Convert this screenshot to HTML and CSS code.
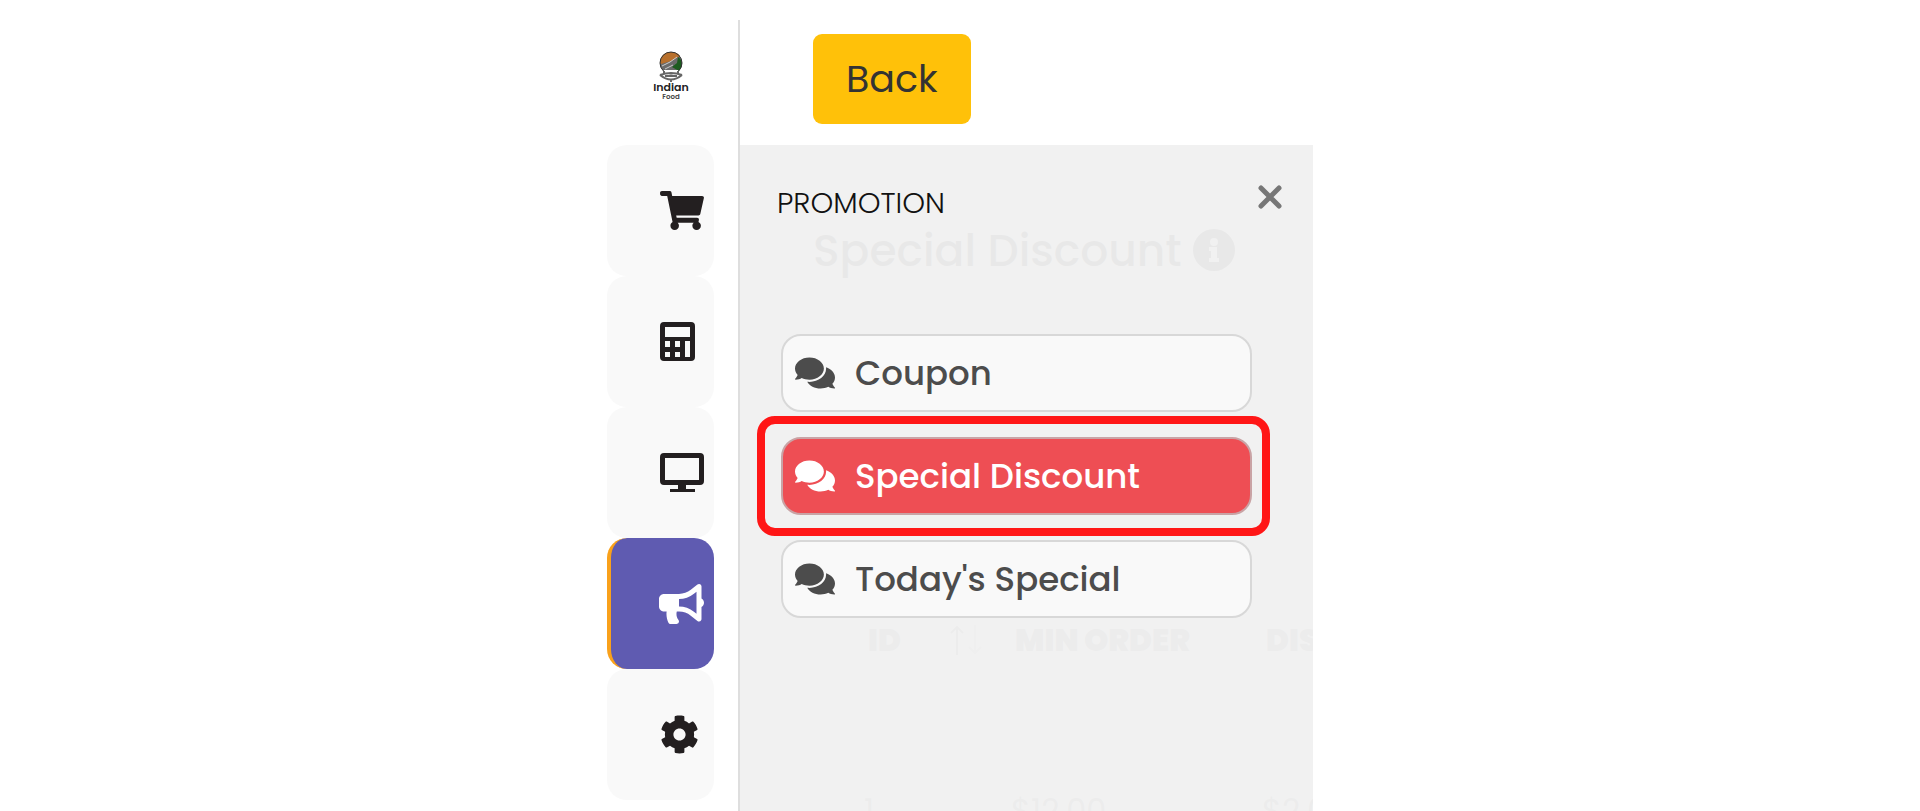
FILE: index.html
```html
<!DOCTYPE html>
<html lang="en">
<head>
<meta charset="utf-8">
<meta name="viewport" content="width=device-width, initial-scale=1">
<title>Special Discount</title>
<link rel="stylesheet" href="styles.css">
</head>
<body>
<svg width="0" height="0" class="sprite" aria-hidden="true">
  <symbol id="comments" viewBox="0 0 576 512"><path d="M416 192c0-88.4-93.1-160-208-160S0 103.6 0 192c0 34.3 14.1 65.9 38 92-13.4 30.2-35.5 54.2-35.8 54.5-2.2 2.3-2.8 5.7-1.5 8.7S4.8 352 8 352c36.6 0 66.9-12.3 88.7-25 32.2 15.7 70.3 25 111.3 25 114.9 0 208-71.6 208-160zm122 220c23.9-26 38-57.7 38-92 0-66.9-53.5-124.2-129.3-148.1.9 6.6 1.3 13.3 1.3 20.1 0 105.9-107.7 192-240 192-10.8 0-21.3-.8-31.7-1.9C207.8 439.6 281.8 480 368 480c41 0 79.1-9.2 111.3-25 21.8 12.7 52.1 25 88.7 25 3.2 0 6.1-1.9 7.3-4.8 1.3-2.9.7-6.3-1.5-8.7-.3-.2-22.4-24.2-35.8-54.5z"/></symbol>
</svg>
<div class="shell">
  <aside class="rail">
    <a class="logo" href="#" aria-label="Indian Food">
      <svg width="40" height="56" viewBox="0 0 40 56">
        <circle cx="20" cy="15" r="11" fill="#6b6b6b"/>
        <path d="M9 15C9 7 15 4 20 4c4 0 7 1 9 4l-9 5-10 3z" fill="#b8702c"/>
        <path d="M27 9c5 3 5 10 1 14l-7-4 5-4z" fill="#1d5c20"/>
        <path d="M11 18l8-4 7-5M14 21l8-4" stroke="#ccc" stroke-width="1" fill="none"/>
        <circle cx="20" cy="15" r="11" fill="none" stroke="#333" stroke-width="1"/>
        <path d="M13 22h14l1 4H12z" fill="#fff"/>
        <path d="M13 23v3M27 23v3M9 27q11-4 22 0M9 27q11 9 22 0M14 28h12M20 31v3" stroke="#666" stroke-width="2" fill="none"/>
        <text x="20" y="43" text-anchor="middle" class="logo-name">Indian</text>
        <text x="20" y="51" text-anchor="middle" class="logo-sub">Food</text>
      </svg>
    </a>
    <nav class="rail-nav" aria-label="Main">
      <a class="tile" href="#" aria-label="Orders"><svg width="44" height="39" viewBox="0 0 576 512"><path d="M528.12 301.319l47.273-208C578.806 78.301 567.391 64 551.99 64H159.208l-9.166-44.81C147.758 8.021 137.93 0 126.529 0H24C10.745 0 0 10.745 0 24v16c0 13.255 10.745 24 24 24h69.883l70.248 343.435C147.325 417.1 136 435.222 136 456c0 30.928 25.072 56 56 56s56-25.072 56-56c0-15.674-6.447-29.835-16.824-40h209.647C430.447 426.165 424 440.326 424 456c0 30.928 25.072 56 56 56s56-25.072 56-56c0-22.172-12.888-41.332-31.579-50.405l5.517-24.276c3.413-15.018-8.002-29.319-23.403-29.319H218.117l-6.545-32h293.145c11.206 0 20.92-7.754 23.403-18.681z"/></svg></a>
      <a class="tile" href="#" aria-label="Accounts"><svg width="35" height="39" viewBox="0 0 35 39"><path fill-rule="evenodd" d="M4 0h27q4 0 4 4v31q0 4-4 4H4q-4 0-4-4V4q0-4 4-4zM5 5v10h25V5zM5 19v6h5v-6zM15 19v6h5v-6zM5 30v5h5v-5zM15 30v5h5v-5zM25 19v16h5V19z"/></svg></a>
      <a class="tile" href="#" aria-label="Display"><svg width="44" height="39" viewBox="0 0 44 39"><path fill-rule="evenodd" d="M4 0h36q4 0 4 4v24q0 4-4 4H26v4h9v3H10v-3h8v-4H4q-4 0-4-4V4q0-4 4-4zM5 5v22h34V5z"/></svg></a>
      <a class="tile tile-active" href="#" aria-label="Promotion" aria-current="page"><svg width="45" height="40" viewBox="0 0 576 512"><path d="M576 240c0-23.63-12.95-44.04-32-55.12V32.01C544 23.26 537.02 0 512 0c-7.12 0-14.19 2.38-19.98 7.02l-85.03 68.03C364.28 109.19 310.66 128 256 128H64c-35.35 0-64 28.65-64 64v96c0 35.35 28.65 64 64 64h33.7c-1.39 10.48-2.18 21.14-2.18 32 0 39.77 9.26 77.35 25.56 110.94 5.19 10.69 16.52 17.06 28.4 17.06h74.28c26.05 0 41.69-29.84 25.9-50.56-16.4-21.52-26.15-48.36-26.15-77.44 0-11.11 1.62-21.79 4.41-32H256c54.66 0 108.28 18.81 150.98 52.95l85.03 68.03a32.023 32.023 0 0 0 19.98 7.02c24.92 0 32-22.78 32-32V295.13C563.05 284.04 576 263.63 576 240zm-96 141.42l-33.05-26.44C392.95 311.78 325.12 288 256 288v-96c69.12 0 136.95-23.78 190.95-66.98L480 98.58v282.84z"/></svg></a>
      <a class="tile" href="#" aria-label="Settings"><svg width="39" height="39" viewBox="0 0 512 512"><path d="M487.4 315.7l-42.6-24.6c4.3-23.2 4.3-47 0-70.2l42.6-24.6c4.9-2.8 7.1-8.6 5.5-14-11.1-35.6-30-67.8-54.7-94.6-3.8-4.1-10-5.1-14.8-2.3L380.8 110c-17.9-15.4-38.5-27.3-60.8-35.1V25.8c0-5.6-3.9-10.5-9.4-11.7-36.7-8.2-74.3-7.8-109.2 0-5.5 1.2-9.4 6.1-9.4 11.7V75c-22.2 7.9-42.8 19.8-60.8 35.1L88.7 85.5c-4.9-2.8-11-1.9-14.8 2.3-24.7 26.7-43.6 58.9-54.7 94.6-1.7 5.4.6 11.2 5.5 14L67.3 221c-4.3 23.2-4.3 47 0 70.2l-42.6 24.6c-4.9 2.8-7.1 8.6-5.5 14 11.1 35.6 30 67.8 54.7 94.6 3.8 4.1 10 5.1 14.8 2.3l42.6-24.6c17.9 15.4 38.5 27.3 60.8 35.1v49.2c0 5.6 3.9 10.5 9.4 11.7 36.7 8.2 74.3 7.8 109.2 0 5.5-1.2 9.4-6.1 9.4-11.7v-49.2c22.2-7.9 42.8-19.8 60.8-35.1l42.6 24.6c4.9 2.8 11 1.9 14.8-2.3 24.7-26.7 43.6-58.9 54.7-94.6 1.5-5.5-.7-11.3-5.6-14.1zM256 336c-44.1 0-80-35.9-80-80s35.9-80 80-80 80 35.9 80 80-35.9 80-80 80z"/></svg></a>
    </nav>
  </aside>
  <main class="main">
    <header class="topbar"><button class="back" type="button">Back</button></header>
    <div class="content">
      <section class="page">
        <h1 class="title">Special Discount
          <svg width="42" height="42" viewBox="0 0 42 42" aria-hidden="true"><path fill-rule="evenodd" d="M21 0a21 21 0 1 1 0 42a21 21 0 1 1 0-42zM21 9a4 4 0 1 0 0 8a4 4 0 1 0 0-8zM16 18v4h2v7h-2v4h10v-4h-2V18z"/></svg>
        </h1>
        <div class="card">
          <table class="orders">
            <thead><tr><th class="col-id"><span class="sort">ID <svg width="36" height="30" viewBox="0 0 36 30" fill="none" aria-hidden="true"><path d="M8 30V2M2 8l6-6 6 6" stroke="#999" stroke-width="2"/><path d="M26 0v28M20 22l6 6 6-6" stroke="#ccc" stroke-width="2"/></svg></span></th><th class="col-min">MIN ORDER</th><th>DISCOUNT</th></tr></thead>
            <tbody><tr><td>1</td><td>$12.00</td><td>$2.00</td></tr></tbody>
          </table>
        </div>
      </section>
      <section class="drawer" aria-labelledby="drawer-title">
        <div class="drawer-head">
          <h2 class="drawer-title" id="drawer-title">PROMOTION</h2>
          <button class="close" type="button" aria-label="Close"><svg width="24" height="24" viewBox="0 0 24 24"><path d="M3 3l18 18M21 3L3 21" stroke="#777" stroke-width="5" stroke-linecap="round"/></svg></button>
        </div>
        <nav class="menu" aria-label="Promotion">
          <a class="item" href="#"><svg width="40" height="36"><use href="#comments"/></svg>Coupon</a>
          <a class="item item-active" href="#" aria-current="page"><svg width="40" height="36"><use href="#comments"/></svg>Special Discount</a>
          <a class="item" href="#"><svg width="40" height="36"><use href="#comments"/></svg>Today's Special</a>
        </nav>
      </section>
    </div>
  </main>
</div>
</body>
</html>
```
FILE: styles.css
```css
* { box-sizing: border-box; }
body {
  margin: 0;
  height: 100vh;
  overflow: hidden;
  background: #fff;
  color: #212529;
  font-family: Poppins, Inter, "Open Sans", sans-serif;
}
svg { display: block; flex: none; }
a { color: inherit; text-decoration: none; }
button { font: inherit; color: inherit; border: 0; padding: 0; cursor: pointer; }
.sprite { position: absolute; }
.shell {
  display: flex;
  width: 100%;
  max-width: 706px;
  height: 100%;
  margin: 0 auto;
  padding-top: 20px;
}
.rail { flex: none; width: 131px; }
.logo {
  display: flex;
  height: 125px;
  padding: 28px 0 0 44px;
}
.logo-name { font-size: 11px; font-weight: 600; fill: #222; }
.logo-sub { font-size: 7px; font-weight: 600; fill: #444; }
.tile {
  display: flex;
  align-items: center;
  width: 107px;
  height: 131px;
  padding-left: 53px;
  border-radius: 20px;
  background: #f9f9f9;
  fill: #231f20;
}
.tile-active {
  padding-left: 48px;
  border-left: 4px solid #f9a11b;
  background: #5f5bb1;
  fill: #fff;
}
.main {
  flex: 1;
  min-width: 0;
  display: flex;
  flex-direction: column;
  border-left: 2px solid #dedede;
}
.topbar { flex: none; height: 125px; padding: 14px 0 0 73px; }
.back {
  padding: 0 33px 2px;
  height: 90px;
  border-radius: 9px;
  background: #ffc109;
  color: #333;
  font-size: 38px;
}
.content { position: relative; flex: 1; overflow: hidden; }
.page { height: 100%; background: #f8f8f8; }
.title {
  display: flex;
  align-items: center;
  gap: 11px;
  height: 252px;
  margin: 0;
  padding: 0 0 42px 73px;
  white-space: nowrap;
  font-size: 44px;
  font-weight: 500;
  color: #555;
  fill: #555;
}
.card {
  margin-left: 110px;
  padding-top: 203px;
  background: #fff;
}
.orders {
  border-collapse: collapse;
  table-layout: fixed;
  width: 720px;
  text-align: left;
  color: #999;
}
.orders th {
  height: 90px;
  padding: 0 0 8px 18px;
  border-bottom: 4px solid #eee;
  font-size: 31px;
  font-weight: 900;
  white-space: nowrap;
}
.orders td { height: 240px; padding: 0 0 0 14px; font-size: 32px; }
.col-id { width: 147px; }
.col-min { width: 251px; }
.sort { display: flex; align-items: center; gap: 48px; }
.drawer {
  position: absolute;
  inset: 0;
  padding: 38px 61px 0 37px;
  background: rgba(240, 240, 240, 0.95);
}
.drawer-head {
  display: flex;
  justify-content: space-between;
  margin-right: -32px;
  padding-right: 2px;
}
.drawer-title { margin: 0; font-size: 29px; line-height: 40px; font-weight: 300; color: #111; }
.close { align-self: flex-start; padding-top: 2px; background: none; }
.menu {
  display: flex;
  flex-direction: column;
  gap: 25px;
  padding: 111px 0 0 4px;
}
.item {
  position: relative;
  display: flex;
  align-items: center;
  gap: 20px;
  height: 78px;
  padding-left: 12px;
  border: 2px solid #d8d8d8;
  border-radius: 20px;
  background: #f9f9f9;
  color: #4c4c4c;
  fill: #4c4c4c;
  font-size: 34px;
  font-weight: 500;
  white-space: nowrap;
}
.item-active { background: #ee4e54; border-color: #c9a3a5; color: #fff; fill: #fff; }
.item-active::after {
  content: "";
  position: absolute;
  inset: -23px -20px -23px -26px;
  border: 8px solid #ff1616;
  border-radius: 18px;
}
```
